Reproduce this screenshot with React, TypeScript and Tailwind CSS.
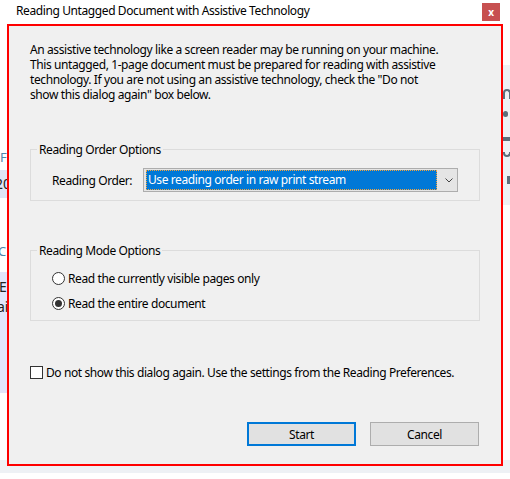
import React from 'react';

const Radio = ({ checked }: { checked?: boolean }) => (
  <span className="w-[13px] h-[13px] rounded-full border border-[#333333] bg-white flex items-center justify-center shrink-0">
    {checked && <span className="w-[7px] h-[7px] rounded-full bg-[#333333]" />}
  </span>
);

const TitleBar = () => (
  <div className="h-[24px] flex items-start justify-between shrink-0">
    <span className="pl-[16px] pt-[3px] leading-[15px]">Reading Untagged Document with Assistive Technology</span>
    <button className="mt-[3px] mr-[10px] w-[18px] h-[18px] bg-[#c75050] text-white text-[10px] font-bold leading-none flex items-center justify-center">
      x
    </button>
  </div>
);

const LeftPeek = () => (
  <div className="w-[7px] flex flex-col overflow-hidden whitespace-nowrap tracking-normal">
    <div className="h-[126px] shrink-0" />
    <div className="h-[14px] shrink-0 text-[13px] leading-[14px] text-[#4f86ab]">F</div>
    <div className="h-[6px] shrink-0" />
    <div className="h-[28px] shrink-0 bg-[#dfe6f6] text-[14px] leading-[28px] text-[#222]">
      <span className="ml-[-5px]">20</span>
    </div>
    <div className="h-[46px] shrink-0" />
    <div className="h-[14px] shrink-0 text-[13px] leading-[14px] text-[#4f86ab]">
      <span className="ml-[-2px]">C</span>
    </div>
    <div className="h-[14px] shrink-0" />
    <div className="h-[121px] shrink-0 bg-[#e2e5fb] text-[14px] leading-[20px] text-[#222] pt-[5px]">
      <div className="ml-[-1px]">E</div>
      <div className="ml-[-3px]">ai</div>
    </div>
    <div className="flex-1" />
    <div className="h-[6px] shrink-0 bg-[#eef1f5]" />
  </div>
);

const RightPeek = () => (
  <div className="w-[7px] flex flex-col overflow-hidden">
    <div className="h-[41px] shrink-0" />
    <div className="h-[140px] shrink-0 bg-[#eef1f5] flex flex-col">
      <div className="mt-[24px] w-[8px] h-[10px] rounded-t-full border-2 border-b-0 border-[#5c6d7a]" />
      <div className="mt-[12px] w-[5px] h-[6px] rounded-full bg-[#5c6d7a]" />
      <div className="mt-[20px] h-[4px] bg-[#5c6d7a]" />
      <div className="mt-[11px] w-[8px] h-[5px] rounded-b-full border-2 border-t-0 border-[#5c6d7a]" />
      <div className="mt-[19px] ml-[4px] w-[3px] h-[8px] bg-[#5c6d7a]" />
    </div>
    <div className="flex-1" />
    <div className="h-[6px] shrink-0 bg-[#eef1f5]" />
  </div>
);

export default function App() {
  return (
    <div className="w-[510px] h-[479px] bg-white overflow-hidden flex flex-col font-['Segoe_UI','Noto_Sans',sans-serif] text-[12px] tracking-[-0.4px] text-black">
      <TitleBar />
      <div className="flex h-[442px] shrink-0">
        <LeftPeek />
        <div className="w-[496px] border-2 border-[#ff0000] bg-[#f0f0f0] flex flex-col px-[21px] pt-[16px]">
          <p className="leading-[15px]">
            An assistive technology like a screen reader may be running on your machine.
            <br />
            This untagged, 1-page document must be prepared for reading with assistive
            <br />
            technology. If you are not using an assistive technology, check the "Do not
            <br />
            show this dialog again" box below.
          </p>

          <fieldset className="mt-[40px] border border-[#dcdcdc] p-0">
            <legend className="ml-[6px] px-[2px] leading-[15px]">Reading Order Options</legend>
            <div className="pt-[11px] pb-[8px] px-[21px] flex items-center">
              <span className="w-[91px] leading-[15px]">Reading Order:</span>
              <div className="w-[315px] h-[24px] border border-[#adadad] bg-[#e5e5e5] flex items-center pl-[2px]">
                <div className="w-[291px] h-[20px] bg-[#0078d7] border border-dotted border-[#f5a33a] text-white pl-[1px] leading-[18px]">
                  Use reading order in raw print stream
                </div>
                <div className="flex-1 flex justify-center pl-[4px]">
                  <svg width="8" height="5" viewBox="0 0 8 5">
                    <polyline points="0.5,0.5 4,4 7.5,0.5" fill="none" stroke="#444444" strokeWidth="1" />
                  </svg>
                </div>
              </div>
            </div>
          </fieldset>

          <fieldset className="mt-[42px] border border-[#dcdcdc] p-0">
            <legend className="ml-[6px] px-[2px] leading-[15px]">Reading Mode Options</legend>
            <div className="pt-[12px] pb-[8px] px-[21px] flex flex-col gap-[8px]">
              <label className="h-[17px] flex items-center gap-[3px]">
                <Radio />
                <span className="leading-[15px]">Read the currently visible pages only</span>
              </label>
              <label className="h-[17px] flex items-center gap-[3px]">
                <Radio checked />
                <span className="leading-[15px]">Read the entire document</span>
              </label>
            </div>
          </fieldset>

          <label className="mt-[43px] h-[17px] flex items-center gap-[3px]">
            <span className="w-[13px] h-[13px] border border-[#333333] bg-white shrink-0" />
            <span className="leading-[15px]">Do not show this dialog again. Use the settings from the Reading Preferences.</span>
          </label>

          <div className="mt-[41px] flex justify-end gap-[14px] mr-[1px]">
            <button className="w-[109px] h-[24px] border-2 border-[#0078d7] bg-[#e1e1e1] leading-[15px]">Start</button>
            <button className="w-[109px] h-[24px] border border-[#adadad] bg-[#e1e1e1] leading-[15px]">Cancel</button>
          </div>
        </div>
        <RightPeek />
      </div>
      <div className="h-[7px] shrink-0 bg-[#eef1f5]" />
    </div>
  );
}
